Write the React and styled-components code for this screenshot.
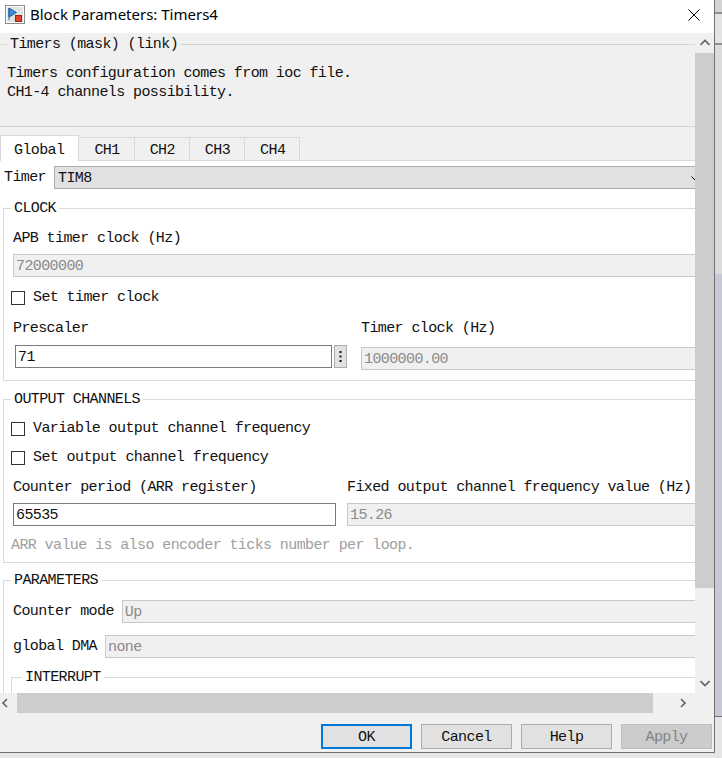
import React from 'react';
import styled, { createGlobalStyle } from 'styled-components';

const GlobalStyle = createGlobalStyle`
  html, body { margin: 0; padding: 0; }
  body { width: 722px; height: 758px; overflow: hidden; }
`;

const Desktop = styled.div`
  width: 722px;
  height: 758px;
  background: linear-gradient(
    to bottom,
    #d4d4d4 0 12px, #8f8f8f 12px 14px, #e4e4e4 14px 43px, #8f8f8f 43px 45px,
    #dcdcdc 45px 274px, #c8c9d7 274px 716px, #707070 716px 717px, #e6e6e6 717px
  );
`;

const Window = styled.div`
  width: 714px;
  height: 752px;
  display: flex;
  flex-direction: column;
  background: #f0f0f0;
  border-right: 1px solid #717171;
  border-bottom: 1px solid #717171;
  font-family: "Liberation Mono", "DejaVu Sans Mono", monospace;
  font-size: 15px;
  letter-spacing: -0.6px;
  line-height: 17px;
  color: #111;
`;

const TitleBar = styled.div`
  height: 33px;
  flex: none;
  box-sizing: border-box;
  display: flex;
  align-items: center;
  padding: 0 14px 4px 5px;
  background: #fff;
`;

const Title = styled.span`
  flex: 1;
  margin-left: 5px;
  font-family: "Noto Sans", "Liberation Sans", sans-serif;
  font-size: 15px;
  letter-spacing: 0;
  color: #000;
`;

const Client = styled.div`
  flex: 1;
  display: flex;
  flex-direction: column;
  min-height: 0;
`;

const ScrollRow = styled.div`
  height: 660px;
  flex: none;
  display: flex;
`;

const Viewport = styled.div`
  width: 695px;
  flex: none;
  overflow: hidden;
  background: #f0f0f0;
`;

const Content = styled.div`
  width: 708px;
`;

const VScroll = styled.div`
  width: 19px;
  display: flex;
  flex-direction: column;
  background: #f0f0f0;
`;

const ArrowCell = styled.div`
  flex: none;
  width: ${p => p.$w}px;
  height: 20px;
  display: flex;
  align-items: center;
  justify-content: ${p => (p.$start ? 'flex-start' : 'center')};
`;

const VThumb = styled.div`
  flex: none;
  height: 535px;
  background: #cdcdcd;
`;

const Track = styled.div`
  flex: 1;
`;

const HRow = styled.div`
  height: 20px;
  flex: none;
  display: flex;
`;

const HScroll = styled.div`
  width: 691px;
  display: flex;
`;

const HThumb = styled.div`
  flex: none;
  width: 636px;
  background: #cdcdcd;
`;

const ButtonBar = styled.div`
  flex: 1;
  display: flex;
  justify-content: flex-end;
  align-items: flex-start;
  gap: 9px;
  padding: 11px 2px 0 0;
`;

const DialogButton = styled.button`
  width: 91px;
  height: 25px;
  box-sizing: border-box;
  padding: 2px 0 0;
  font: inherit;
  letter-spacing: inherit;
  background: ${p => (p.disabled ? '#cccccc' : '#e1e1e1')};
  border: ${p => (p.$primary ? '2px solid #0078d7' : `1px solid ${p.disabled ? '#bfbfbf' : '#adadad'}`)};
  color: ${p => (p.disabled ? '#838383' : '#111')};
`;

/* mask header */
const MaskHeader = styled.fieldset`
  margin: 3px 0 0 0;
  padding: 0 0 24px 7px;
  min-width: 0;
  border: none;
  border-top: 1px solid #d5d5d5;
  border-bottom: 1px solid #d5d5d5;
`;

const Legend = styled.legend`
  margin-left: -2px;
  padding: 0 3px;
  line-height: 17px;
`;

const MaskLegend = styled(Legend)`
  margin-left: 0;
`;

const Description = styled.div`
  margin-top: 11px;
  line-height: 19px;
`;

/* tabs */
const TabBar = styled.div`
  margin-top: 8px;
  height: 25px;
  display: flex;
  align-items: flex-end;
`;

const Tab = styled.div`
  position: relative;
  z-index: 1;
  box-sizing: border-box;
  height: ${p => (p.$active ? 26 : 23)}px;
  margin-bottom: ${p => (p.$active ? -1 : 0)}px;
  margin-left: -1px;
  padding: 3px 14px 0 ${p => (p.$active ? 13 : 15)}px;
  display: flex;
  align-items: center;
  background: ${p => (p.$active ? '#fff' : '#f0f0f0')};
  border: 1px solid #d9d9d9;
  border-bottom: none;
  &:first-child { margin-left: 0; }
`;

const Panel = styled.div`
  background: #fff;
  border-top: 1px solid #d9d9d9;
  padding-bottom: 40px;
`;

const FormRow = styled.div`
  margin-top: ${p => p.$mt}px;
  padding: 0 2px 0 ${p => p.$pl || 0}px;
  display: flex;
  align-items: center;
  gap: 8px;
  white-space: nowrap;
`;

const Group = styled.fieldset`
  margin: ${p => p.$mt}px 0 0 3px;
  padding: 0 0 ${p => p.$pb}px 9px;
  min-width: 0;
  border: 1px solid #dadada;
`;

const SubGroup = styled(Group)`
  margin-left: -2px;
  padding-left: 12px;
  height: 40px;
`;

const Label = styled.div`
  margin-top: ${p => p.$mt || 0}px;
  white-space: nowrap;
`;

const HelpText = styled(Label)`
  margin-left: -2px;
  color: #9e9e9e;
`;

const Field = styled.div`
  flex: ${p => (p.$grow ? '1 1 auto' : 'none')};
  height: 23px;
  margin-top: ${p => p.$mt || 0}px;
  box-sizing: border-box;
  display: flex;
  align-items: center;
  padding: 1px 0 0 2px;
  white-space: nowrap;
  border: 1px solid ${p => (p.$disabled ? '#c9c9c9' : '#7a7a7a')};
  background: ${p => (p.$disabled ? '#f0f0f0' : '#fff')};
  color: ${p => (p.$disabled ? '#8a8a8a' : '#111')};
`;

const Combo = styled(Field)`
  justify-content: space-between;
  padding: 1px 6px 0 3px;
  border-color: #adadad;
  background: #e1e1e1;
`;

const CheckRow = styled.label`
  margin: ${p => p.$mt}px 0 0 -2px;
  height: 17px;
  display: flex;
  align-items: center;
  gap: 8px;
  white-space: nowrap;
`;

const Box = styled.span`
  flex: none;
  width: 12px;
  height: 12px;
  border: 1px solid #333;
  background: #fff;
`;

const Columns = styled.div`
  margin-top: ${p => p.$mt}px;
  display: grid;
  grid-template-columns: ${p => p.$left}px 1fr;
  column-gap: ${p => p.$gap}px;
`;

const Column = styled.div`
  display: flex;
  flex-direction: column;
`;

const InputRow = styled.div`
  margin: ${p => p.$mt}px 0 0 2px;
  display: flex;
  gap: 2px;
`;

const MoreButton = styled.div`
  flex: none;
  width: 13px;
  height: 23px;
  box-sizing: border-box;
  display: flex;
  align-items: center;
  justify-content: center;
  background: #e1e1e1;
  border: 1px solid #adadad;
`;

const chevronPaths = {
  up: 'M0.5 7L5 2.5L9.5 7',
  down: 'M0.5 3L5 7.5L9.5 3',
  left: 'M7 1L3 5L7 9',
  right: 'M3 1L7 5L3 9',
};

const Chevron = ({ dir }) => (
  <svg width="10" height="10" viewBox="0 0 10 10">
    <path d={chevronPaths[dir]} fill="none" stroke="#606060" strokeWidth="1.6" />
  </svg>
);

const AppIcon = () => (
  <svg width="20" height="19" viewBox="0 0 20 19">
    <rect x="0.5" y="0.5" width="19" height="18" fill="#cfcfcf" stroke="#8c8c8c" />
    <rect x="1.5" y="1.5" width="17" height="16" fill="#e2e2e2" stroke="#fff" />
    <path d="M4 3L11.5 7.5L4 12Z" fill="#3d8fd6" stroke="#1f5fa8" strokeLinejoin="round" />
    <path d="M4 3V15" stroke="#1f5fa8" />
    <rect x="10.5" y="10.5" width="6" height="6" fill="#e2462a" stroke="#a3200f" />
  </svg>
);

const CloseIcon = () => (
  <svg width="12" height="12" viewBox="0 0 12 12">
    <path d="M0.5 0.5L11.5 11.5M11.5 0.5L0.5 11.5" stroke="#000" strokeWidth="1" />
  </svg>
);

const DropArrow = () => (
  <svg width="8" height="5" viewBox="0 0 8 5">
    <path d="M0.5 0.5L4 4L7.5 0.5" fill="none" stroke="#000" />
  </svg>
);

const Dots = () => (
  <svg width="3" height="13" viewBox="0 0 3 13">
    <rect x="0.5" y="1" width="2" height="2" fill="#111" />
    <rect x="0.5" y="5.5" width="2" height="2" fill="#111" />
    <rect x="0.5" y="10" width="2" height="2" fill="#111" />
  </svg>
);

const tabs = ['Global', 'CH1', 'CH2', 'CH3', 'CH4'];

export default function App() {
  return (
    <>
      <GlobalStyle />
      <Desktop>
        <Window>
          <TitleBar>
            <AppIcon />
            <Title>Block Parameters: Timers4</Title>
            <CloseIcon />
          </TitleBar>
          <Client>
            <ScrollRow>
              <Viewport>
                <Content>
                  <MaskHeader>
                    <MaskLegend>Timers (mask) (link)</MaskLegend>
                    <Description>
                      <div>Timers configuration comes from ioc file.</div>
                      <div>CH1-4 channels possibility.</div>
                    </Description>
                  </MaskHeader>

                  <TabBar>
                    {tabs.map((t, i) => (
                      <Tab key={t} $active={i === 0}>{t}</Tab>
                    ))}
                  </TabBar>

                  <Panel>
                    <FormRow $mt={5} $pl={4}>
                      <span>Timer</span>
                      <Combo $grow>
                        <span>TIM8</span>
                        <DropArrow />
                      </Combo>
                    </FormRow>

                    <Group $mt={11} $pb={10}>
                      <Legend>CLOCK</Legend>
                      <Label $mt={13}>APB timer clock (Hz)</Label>
                      <Field $disabled $mt={7}>72000000</Field>
                      <CheckRow $mt={12}><Box />Set timer clock</CheckRow>
                      <Columns $mt={14} $left={334} $gap={14}>
                        <Column>
                          <Label>Prescaler</Label>
                          <InputRow $mt={8}>
                            <Field $grow>71</Field>
                            <MoreButton><Dots /></MoreButton>
                          </InputRow>
                        </Column>
                        <Column>
                          <Label>Timer clock (Hz)</Label>
                          <Field $disabled $mt={10}>1000000.00</Field>
                        </Column>
                      </Columns>
                    </Group>

                    <Group $mt={10} $pb={8}>
                      <Legend>OUTPUT CHANNELS</Legend>
                      <CheckRow $mt={12}><Box />Variable output channel frequency</CheckRow>
                      <CheckRow $mt={12}><Box />Set output channel frequency</CheckRow>
                      <Columns $mt={13} $left={323} $gap={11}>
                        <Column>
                          <Label>Counter period (ARR register)</Label>
                          <Field $mt={7}>65535</Field>
                        </Column>
                        <Column>
                          <Label>Fixed output channel frequency value (Hz)</Label>
                          <Field $disabled $mt={7}>15.26</Field>
                        </Column>
                      </Columns>
                      <HelpText $mt={11}>ARR value is also encoder ticks number per loop.</HelpText>
                    </Group>

                    <Group $mt={9} $pb={20}>
                      <Legend>PARAMETERS</Legend>
                      <FormRow $mt={11}>
                        <span>Counter mode</span>
                        <Field $disabled $grow>Up</Field>
                      </FormRow>
                      <FormRow $mt={12}>
                        <span>global DMA</span>
                        <Field $disabled $grow>none</Field>
                      </FormRow>
                      <SubGroup $mt={11} $pb={10}>
                        <Legend>INTERRUPT</Legend>
                      </SubGroup>
                    </Group>
                  </Panel>
                </Content>
              </Viewport>
              <VScroll>
                <ArrowCell $w={19}><Chevron dir="up" /></ArrowCell>
                <VThumb />
                <Track />
                <ArrowCell $w={19}><Chevron dir="down" /></ArrowCell>
              </VScroll>
            </ScrollRow>

            <HRow>
              <HScroll>
                <ArrowCell $w={17} $start><Chevron dir="left" /></ArrowCell>
                <HThumb />
                <Track />
                <ArrowCell $w={17}><Chevron dir="right" /></ArrowCell>
              </HScroll>
            </HRow>

            <ButtonBar>
              <DialogButton $primary>OK</DialogButton>
              <DialogButton>Cancel</DialogButton>
              <DialogButton>Help</DialogButton>
              <DialogButton disabled>Apply</DialogButton>
            </ButtonBar>
          </Client>
        </Window>
      </Desktop>
    </>
  );
}
